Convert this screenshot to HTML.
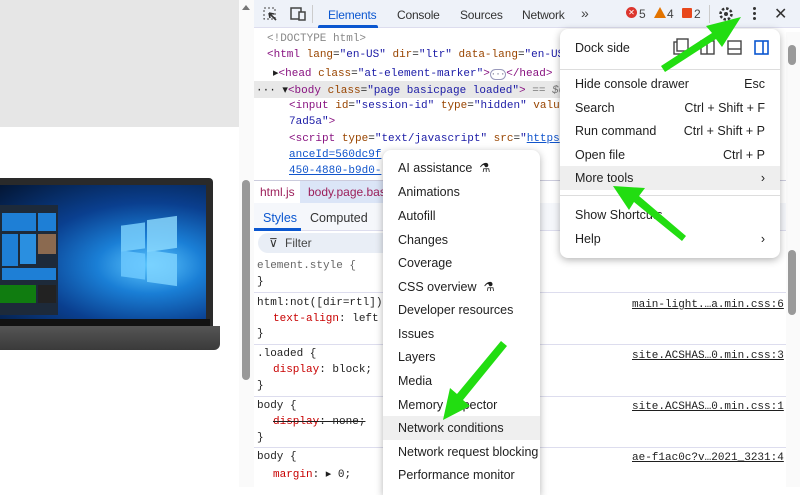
<!DOCTYPE html>
<html><head><style>
*{margin:0;padding:0;box-sizing:border-box}
body{width:800px;height:487px;overflow:hidden;position:relative;background:#fff;font-family:"Liberation Sans",sans-serif;font-size:12px;color:#1f1f1f}
.a{position:absolute;white-space:nowrap}
.m{font-family:"Liberation Mono",monospace;font-size:11px}
.tg{color:#881280}.at{color:#994500}.av{color:#1a1aa6}.lk{color:#1155cc;text-decoration:underline}
.pr{color:#c80000}
.menu{position:absolute;background:#fff;border-radius:8px;box-shadow:0 2px 8px rgba(0,0,0,.3)}
.mi{position:absolute;left:0;right:0;height:24px;line-height:24px;padding-left:15px;font-size:12.5px}
.mi span{position:absolute;right:15px}
.sep{position:absolute;left:0;right:0;border-top:1px solid #ddd}
.tb{position:absolute;top:8px;font-size:12px;color:#333;letter-spacing:-0.2px}
</style></head><body>
<div class="a" style="left:0;top:0;width:239px;height:127px;background:#e6e6e6"></div>
<!-- laptop -->
<div class="a" style="left:0;top:178px;width:213px;height:148px;background:#2a2a2a;border-radius:0 4px 0 0"></div>
<div class="a" style="left:0;top:185px;width:206px;height:134px;background:radial-gradient(ellipse at 150px 80px,#5fc8ff 0%,#1a7fd6 25%,#0a3f8f 55%,#031634 100%)"></div>
<div class="a" style="left:121px;top:224px;width:24px;height:26px;background:#7fd4ff;opacity:.8;transform:skewY(-8deg)"></div>
<div class="a" style="left:147px;top:218px;width:30px;height:32px;background:#8fdcff;opacity:.8;transform:skewY(-8deg)"></div>
<div class="a" style="left:121px;top:252px;width:24px;height:26px;background:#6fcaff;opacity:.8;transform:skewY(8deg)"></div>
<div class="a" style="left:147px;top:252px;width:30px;height:32px;background:#7fd4ff;opacity:.8;transform:skewY(8deg)"></div>
<div class="a" style="left:0;top:205px;width:58px;height:110px;background:#1d2a3a"></div>
<div class="a" style="left:2px;top:213px;width:34px;height:18px;background:#1e7fd6"></div>
<div class="a" style="left:38px;top:213px;width:18px;height:18px;background:#1e7fd6"></div>
<div class="a" style="left:2px;top:234px;width:16px;height:32px;background:#1e7fd6"></div>
<div class="a" style="left:20px;top:234px;width:16px;height:30px;background:#2a8fe0"></div>
<div class="a" style="left:38px;top:234px;width:18px;height:20px;background:#8b6a50"></div>
<div class="a" style="left:2px;top:268px;width:54px;height:12px;background:#1e7fd6"></div>
<div class="a" style="left:0;top:285px;width:36px;height:18px;background:#107c10"></div>
<div class="a" style="left:38px;top:285px;width:18px;height:18px;background:#222"></div>
<div class="a" style="left:0;top:319px;width:210px;height:10px;background:#111"></div>
<div class="a" style="left:0;top:326px;width:220px;height:24px;background:linear-gradient(#555,#3a3a3a);border-radius:0 0 6px 0"></div>

<!-- scrollbar strip -->
<div class="a" style="left:239px;top:0;width:15px;height:487px;background:#fafafa"></div>
<div class="a" style="left:242px;top:5px;width:0;height:0;border-left:4px solid transparent;border-right:4px solid transparent;border-bottom:5px solid #777"></div>
<div class="a" style="left:242px;top:180px;width:8px;height:200px;background:#999;border-radius:4px"></div>

<!-- toolbar -->
<div class="a" style="left:254px;top:0;width:546px;height:28px;background:#eef2f9;border-bottom:1px solid #dde"></div>
<svg class="a" style="left:262px;top:6px" width="16" height="16"><rect x="2" y="2" width="11" height="11" fill="none" stroke="#444" stroke-dasharray="2 2"/><path d="M7 7 L14 14 M7 7 L12 8 M7 7 L8 12" stroke="#333" stroke-width="1.6" fill="none"/></svg>
<svg class="a" style="left:289px;top:6px" width="18" height="16"><rect x="2" y="2" width="10" height="11" fill="none" stroke="#444" stroke-width="1.5"/><rect x="10" y="6" width="6" height="8" fill="#eef2f9" stroke="#444" stroke-width="1.5"/></svg>
<div class="a" style="left:312px;top:5px;width:1px;height:18px;background:#ccc"></div>
<div class="tb" style="left:328px;color:#0b57d0">Elements</div>
<div class="a" style="left:318px;top:25px;width:60px;height:3px;background:#0b57d0;border-radius:2px 2px 0 0"></div>
<div class="tb" style="left:397px">Console</div>
<div class="tb" style="left:460px">Sources</div>
<div class="tb" style="left:522px">Network</div>
<div class="a" style="left:581px;top:5px;font-size:14px;color:#444">»</div>
<div class="a" style="left:626px;top:7px;width:11px;height:11px;border-radius:50%;background:#dc362e;color:#fff;font-size:8px;line-height:11px;text-align:center">✕</div>
<div class="a" style="left:639px;top:7px;font-size:12px;color:#444">5</div>
<div class="a" style="left:654px;top:7px;width:0;height:0;border-left:6px solid transparent;border-right:6px solid transparent;border-bottom:11px solid #e37400"></div>
<div class="a" style="left:667px;top:7px;font-size:12px;color:#444">4</div>
<div class="a" style="left:682px;top:8px;width:10px;height:10px;background:#e8471c;border-radius:1px"></div>
<div class="a" style="left:694px;top:7px;font-size:12px;color:#444">2</div>
<div class="a" style="left:709px;top:5px;width:1px;height:18px;background:#ccc"></div>
<svg class="a" style="left:718px;top:6px" width="16" height="16"><circle cx="8" cy="8" r="5.5" fill="none" stroke="#333" stroke-width="2.5" stroke-dasharray="2.5 1.8"/><circle cx="8" cy="8" r="2" fill="#333"/></svg>
<div class="a" style="left:753px;top:7px;width:3px;height:3px;background:#333;border-radius:50%;box-shadow:0 5px 0 #333,0 10px 0 #333"></div>
<div class="a" style="left:774px;top:4px;font-size:16px;color:#333">✕</div>

<!-- elements tree -->
<div class="a m" style="left:267px;top:33px;color:#888">&lt;!DOCTYPE html&gt;</div>
<div class="a m" style="left:267px;top:49px"><span class="tg">&lt;html</span> <span class="at">lang</span>=<span class="av">"en-US"</span> <span class="at">dir</span>=<span class="av">"ltr"</span> <span class="at">data-lang</span>=<span class="av">"en-US</span></div>
<div class="a m" style="left:273px;top:66px">▸<span class="tg">&lt;head</span> <span class="at">class</span>=<span class="av">"at-element-marker"</span><span class="tg">&gt;</span><span style="border:1px solid #99b;border-radius:6px;font-size:8px;color:#557">···</span><span class="tg">&lt;/head&gt;</span></div>
<div class="a" style="left:254px;top:81px;width:310px;height:17px;background:#e8e8e8"></div>
<div class="a m" style="left:256px;top:83px">··· ▾<span class="tg">&lt;body</span> <span class="at">class</span>=<span class="av">"page basicpage loaded"</span><span class="tg">&gt;</span> <i style="color:#777">== $0</i></div>
<div class="a m" style="left:289px;top:100px"><span class="tg">&lt;input</span> <span class="at">id</span>=<span class="av">"session-id"</span> <span class="at">type</span>=<span class="av">"hidden"</span> <span class="at">valu</span></div>
<div class="a m" style="left:289px;top:116px"><span class="av">7ad5a"</span><span class="tg">&gt;</span></div>
<div class="a m" style="left:289px;top:133px"><span class="tg">&lt;script</span> <span class="at">type</span>=<span class="av">"text/javascript"</span> <span class="at">src</span>=<span class="av">"</span><span class="lk">https</span></div>
<div class="a m lk" style="left:289px;top:149px">anceId=560dc9f</div>
<div class="a m lk" style="left:289px;top:165px">450-4880-b9d0-</div>
<!-- right scrollbar -->
<div class="a" style="left:786px;top:32px;width:14px;height:455px;background:#fafafa"></div>
<div class="a" style="left:788px;top:45px;width:8px;height:20px;background:#999;border-radius:4px"></div>
<div class="a" style="left:788px;top:250px;width:8px;height:65px;background:#999;border-radius:4px"></div>

<!-- breadcrumbs -->
<div class="a" style="left:254px;top:180px;width:532px;height:1px;background:#ccd"></div>
<div class="a" style="left:300px;top:181px;width:90px;height:22px;background:#dbe5f7"></div>
<div class="a" style="left:260px;top:185px;font-size:12px;color:#9c1f5a">html.js</div>
<div class="a" style="left:308px;top:185px;font-size:12px;color:#9c1f5a">body.page.bas</div>
<div class="a" style="left:254px;top:203px;width:532px;height:28px;background:#f5f7fb;border-bottom:1px solid #dde"></div>
<div class="a" style="left:263px;top:211px;font-size:12.5px;color:#0b57d0">Styles</div>
<div class="a" style="left:254px;top:228px;width:47px;height:3px;background:#0b57d0"></div>
<div class="a" style="left:310px;top:211px;font-size:12.5px;color:#333">Computed</div>
<div class="a" style="left:258px;top:233px;width:140px;height:20px;background:#e9eef6;border-radius:10px"></div>
<div class="a" style="left:269px;top:236px;font-size:12px;color:#333">⊽</div>
<div class="a" style="left:285px;top:236px;font-size:12px;color:#444">Filter</div>

<!-- styles -->
<div class="a m" style="left:257px;top:260px;color:#666">element.style {</div>
<div class="a m" style="left:257px;top:276px">}</div>
<div class="a" style="left:254px;top:292px;width:532px;height:1px;background:#dde"></div>
<div class="a m" style="left:257px;top:297px">html:not([dir=rtl])</div>
<div class="a m" style="left:273px;top:313px"><span class="pr">text-align</span>: left</div>
<div class="a m" style="left:257px;top:328px">}</div>
<div class="a" style="left:254px;top:344px;width:532px;height:1px;background:#dde"></div>
<div class="a m" style="left:257px;top:348px">.loaded {</div>
<div class="a m" style="left:273px;top:364px"><span class="pr">display</span>: block;</div>
<div class="a m" style="left:257px;top:380px">}</div>
<div class="a" style="left:254px;top:396px;width:532px;height:1px;background:#dde"></div>
<div class="a m" style="left:257px;top:400px">body {</div>
<div class="a m" style="left:273px;top:416px;text-decoration:line-through"><span class="pr">display</span>: none;</div>
<div class="a m" style="left:257px;top:432px">}</div>
<div class="a" style="left:254px;top:447px;width:532px;height:1px;background:#dde"></div>
<div class="a m" style="left:257px;top:451px">body {</div>
<div class="a m" style="left:273px;top:467px"><span class="pr">margin</span>: ▸ 0;</div>
<div class="a m" style="left:632px;top:299px;text-decoration:underline">main-light.…a.min.css:6</div>
<div class="a m" style="left:632px;top:350px;text-decoration:underline">site.ACSHAS…0.min.css:3</div>
<div class="a m" style="left:632px;top:401px;text-decoration:underline">site.ACSHAS…0.min.css:1</div>
<div class="a m" style="left:632px;top:452px;text-decoration:underline">ae-f1ac0c?v…2021_3231:4</div>

<!-- main menu -->
<div class="menu" style="left:560px;top:29px;width:220px;height:229px">
 <div class="mi" style="top:7px">Dock side</div>
 <svg class="a" style="left:112px;top:9px" width="100" height="18"><rect x="2" y="4" width="11" height="12" fill="none" stroke="#444" stroke-width="1.4"/><rect x="5" y="1" width="11" height="12" fill="#fff" stroke="#444" stroke-width="1.4"/><rect x="29" y="3" width="13" height="13" fill="none" stroke="#444" stroke-width="1.4"/><line x1="35" y1="3" x2="35" y2="16" stroke="#444" stroke-width="1.4"/><rect x="56" y="3" width="13" height="13" fill="none" stroke="#444" stroke-width="1.4"/><line x1="56" y1="11" x2="69" y2="11" stroke="#444" stroke-width="1.4"/><rect x="83" y="3" width="13" height="13" fill="none" stroke="#0b57d0" stroke-width="1.6"/><line x1="91" y1="3" x2="91" y2="16" stroke="#0b57d0" stroke-width="1.6"/></svg>
 <div class="sep" style="top:40px"></div>
 <div class="mi" style="top:43px">Hide console drawer<span>Esc</span></div>
 <div class="mi" style="top:67px">Search<span>Ctrl + Shift + F</span></div>
 <div class="mi" style="top:90px">Run command<span>Ctrl + Shift + P</span></div>
 <div class="mi" style="top:114px">Open file<span>Ctrl + P</span></div>
 <div class="mi" style="top:137px;background:#eee">More tools<span>›</span></div>
 <div class="sep" style="top:166px"></div>
 <div class="mi" style="top:174px">Show Shortcuts</div>
 <div class="mi" style="top:198px">Help<span>›</span></div>
</div>

<!-- submenu -->
<div class="menu" style="left:383px;top:150px;width:157px;height:345px;border-radius:8px 8px 0 0">
 <div class="mi" style="top:6px">AI assistance &nbsp;⚗</div>
 <div class="mi" style="top:30px">Animations</div>
 <div class="mi" style="top:54px">Autofill</div>
 <div class="mi" style="top:78px">Changes</div>
 <div class="mi" style="top:101px">Coverage</div>
 <div class="mi" style="top:125px">CSS overview &nbsp;⚗</div>
 <div class="mi" style="top:148px">Developer resources</div>
 <div class="mi" style="top:172px">Issues</div>
 <div class="mi" style="top:195px">Layers</div>
 <div class="mi" style="top:219px">Media</div>
 <div class="mi" style="top:243px">Memory inspector</div>
 <div class="mi" style="top:266px;background:#efefef">Network conditions</div>
 <div class="mi" style="top:290px">Network request blocking</div>
 <div class="mi" style="top:313px">Performance monitor</div>
</div>

<!-- arrows -->
<svg class="a" style="left:0;top:0" width="800" height="487">
 <polygon points="741,17 722,47 716,39 665,72 661,66 712,33 706,26" fill="#22dd11"/>
 <polygon points="613,186 645,188 639,196 686,236 682,241 634,202 629,210" fill="#22dd11"/>
 <polygon points="443,420 450,388 457,394 501,341 507,346 463,400 470,406" fill="#22dd11"/>
</svg>
</body></html>
